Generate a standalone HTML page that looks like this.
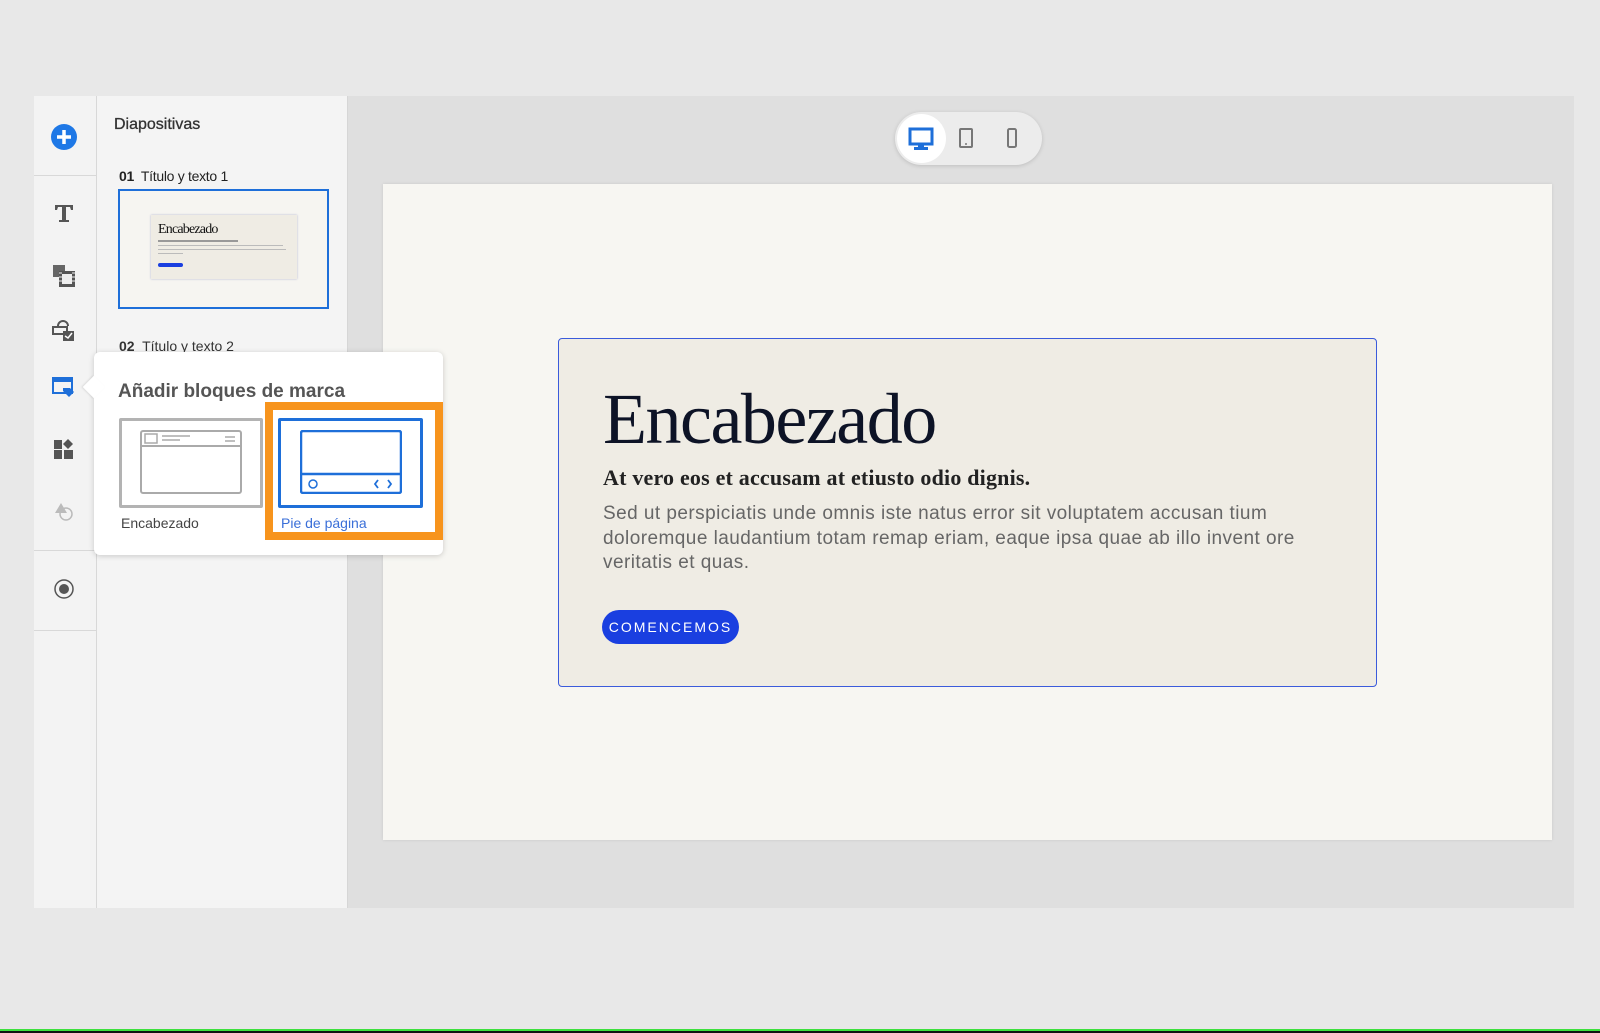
<!DOCTYPE html>
<html><head><meta charset="utf-8"><style>
*{box-sizing:border-box;margin:0;padding:0}
body{width:1600px;height:1033px;background:#e8e8e8;position:relative;overflow:hidden;font-family:"Liberation Sans",sans-serif}
.abs{position:absolute}
.rail{left:34px;top:96px;width:63px;height:812px;background:#f3f3f3;border-right:1px solid #d8d8d8}
.sep{position:absolute;left:0;width:62px;height:1px;background:#d8d8d8}
.panel{left:97px;top:96px;width:251px;height:812px;background:#f4f4f4;border-right:1px solid #d6d6d6}
.canvas{left:348px;top:96px;width:1226px;height:812px;background:#dfdfdf}
.slide{left:383px;top:184px;width:1169px;height:656px;background:#f7f6f2;box-shadow:0 0 3px rgba(0,0,0,.1)}
.card{left:558px;top:338px;width:819px;height:349px;background:#efece4;border:1.5px solid #3b5bdb;border-radius:4px}
.toggle{left:895px;top:112px;width:147px;height:53px;background:#ececec;border-radius:27px;box-shadow:0 1px 4px rgba(0,0,0,.15)}
.pop{left:94px;top:352px;width:349px;height:203px;background:#fff;border-radius:6px;box-shadow:0 1px 6px rgba(0,0,0,.18)}
</style></head><body>
<div class="abs rail">
  <svg class="abs" style="left:16px;top:27px" width="28" height="28" viewBox="0 0 28 28"><circle cx="14" cy="14" r="13" fill="#1e78e6"/><path d="M14 7v14M7 14h14" stroke="#fff" stroke-width="3.5"/></svg>
  <div class="sep" style="top:79px"></div>
  <svg class="abs" style="left:19px;top:106px" width="22" height="22" viewBox="0 0 22 22"><path d="M2 3h18v5h-2l-1-3h-4v13h3v2H6v-2h3V5H5L4 8H2z" fill="#555"/></svg>
  <svg class="abs" style="left:18px;top:168px" width="24" height="24" viewBox="0 0 24 24"><rect x="1" y="1" width="12" height="12" fill="#666"/><rect x="7" y="7" width="16" height="16" fill="#555"/><rect x="10" y="10" width="10" height="10" fill="#eee"/><path d="M7 9h3M7 13h3M7 17h3M20 9h3M20 13h3M20 17h3" stroke="#eee"/></svg>
  <svg class="abs" style="left:18px;top:222px" width="24" height="24" viewBox="0 0 24 24"><path d="M6 8a5 5 0 0 1 10 0" stroke="#555" stroke-width="2" fill="none"/><rect x="1" y="9" width="14" height="7" fill="none" stroke="#555" stroke-width="2"/><rect x="11" y="13" width="11" height="10" fill="#555"/><path d="M13 18l3 2 4-5" stroke="#fff" stroke-width="1.5" fill="none"/></svg>
  <svg class="abs" style="left:18px;top:279px" width="24" height="24" viewBox="0 0 24 24"><rect x="1" y="3" width="19" height="15" fill="none" stroke="#1e6fd9" stroke-width="2"/><rect x="1" y="3" width="19" height="4" fill="#1e6fd9"/><path d="M11 13h7l4 4-5 5-6-6z" fill="#1e6fd9"/></svg>
  <svg class="abs" style="left:19px;top:342px" width="22" height="22" viewBox="0 0 22 22"><rect x="1" y="2" width="8" height="9" fill="#555"/><rect x="1" y="12" width="8" height="9" fill="#555"/><rect x="11" y="12" width="9" height="9" fill="#555"/><path d="M15 1l5 5-5 5-5-5z" fill="#555"/></svg>
  <svg class="abs" style="left:19px;top:405px" width="22" height="22" viewBox="0 0 22 22"><path d="M8 2l6 10H2z" fill="#bbb"/><circle cx="13" cy="13" r="6" fill="none" stroke="#bbb" stroke-width="1.5"/></svg>
  <div class="sep" style="top:454px"></div>
  <svg class="abs" style="left:19px;top:482px" width="22" height="22" viewBox="0 0 22 22"><circle cx="11" cy="11" r="9" fill="none" stroke="#555" stroke-width="1.5"/><circle cx="11" cy="11" r="5" fill="#555"/></svg>
  <div class="sep" style="top:534px"></div>
</div>
<div class="abs panel">
  <div class="abs" style="left:17px;top:20px;font-size:16px;color:#333;-webkit-text-stroke:.3px #333">Diapositivas</div>
  <div class="abs" style="left:22px;top:72px;font-size:14px;color:#222;letter-spacing:-.3px"><b>01</b>&nbsp; Título y texto 1</div>
  <div class="abs" style="left:21px;top:93px;width:211px;height:120px;border:2px solid #1e6fd9;background:#f6f5f1">
    <div class="abs" style="left:31px;top:24px;width:146px;height:64px;background:#efece4;box-shadow:0 0 2px rgba(80,80,160,.4)">
      <div class="abs" style="left:7px;top:7px;font-family:'Liberation Serif',serif;font-size:14px;letter-spacing:-.8px;color:#111">Encabezado</div>
      <div class="abs" style="left:7px;top:25px;width:80px;height:2px;background:#999"></div>
      <div class="abs" style="left:7px;top:30px;width:125px;height:1px;background:#bbb"></div>
      <div class="abs" style="left:7px;top:34px;width:128px;height:1px;background:#bbb"></div>
      <div class="abs" style="left:7px;top:38px;width:25px;height:1px;background:#bbb"></div>
      <div class="abs" style="left:7px;top:48px;width:25px;height:4px;border-radius:2px;background:#1a3fe0"></div>
    </div>
  </div>
  <div class="abs" style="left:22px;top:242px;font-size:14px;color:#333"><b>02</b>&nbsp; Título y texto 2</div>
</div>
<div class="abs canvas"></div>
<div class="abs toggle">
  <div class="abs" style="left:2px;top:2px;width:49px;height:49px;border-radius:50%;background:#fff"></div>
  <svg class="abs" style="left:13px;top:15px" width="26" height="24" viewBox="0 0 26 24"><rect x="2" y="2" width="22" height="15" fill="none" stroke="#1e6fd9" stroke-width="3"/><path d="M10 17h6v3h4v3H6v-3h4z" fill="#1e6fd9"/></svg>
  <svg class="abs" style="left:63px;top:15px" width="16" height="22" viewBox="0 0 16 22"><rect x="2" y="2" width="12" height="18" rx="1" fill="none" stroke="#777" stroke-width="2"/><circle cx="8" cy="17" r="1" fill="#777"/></svg>
  <svg class="abs" style="left:111px;top:15px" width="12" height="22" viewBox="0 0 12 22"><rect x="2" y="2" width="8" height="18" rx="1.5" fill="none" stroke="#777" stroke-width="2"/></svg>
</div>
<div class="abs slide"></div>
<div class="abs card">
  <div class="abs" style="left:44px;top:44px;font-family:'Liberation Serif',serif;font-size:72px;color:#0d1326;line-height:1;letter-spacing:-1.5px;white-space:nowrap">Encabezado</div>
  <div class="abs" style="left:44px;top:126px;font-family:'Liberation Serif',serif;font-weight:bold;font-size:22px;color:#222;white-space:nowrap;letter-spacing:.2px">At vero eos et accusam at etiusto odio dignis.</div>
  <div class="abs" style="left:44px;top:163px;font-size:19px;color:#666;line-height:24.5px;letter-spacing:.45px;white-space:nowrap">Sed ut perspiciatis unde omnis iste natus error sit voluptatem accusan tium<br>doloremque laudantium totam remap eriam, eaque ipsa quae ab illo invent ore<br>veritatis et quas.</div>
  <div class="abs" style="left:43px;top:271px;width:137px;height:34px;border-radius:17px;background:#1a3fe0;color:#fff;font-size:14px;letter-spacing:2px;line-height:34px;text-align:center">COMENCEMOS</div>
</div>
<div class="abs pop">
  <div class="abs" style="left:-8px;top:27px;width:16px;height:16px;background:#fff;transform:rotate(45deg);box-shadow:-1px 1px 2px rgba(0,0,0,.1)"></div>
  <div class="abs" style="left:24px;top:29px;font-size:19px;font-weight:bold;color:#555">Añadir bloques de marca</div>
  <div class="abs" style="left:25px;top:66px;width:144px;height:90px;border:3px solid #b3b3b3;border-radius:2px">
    <svg class="abs" style="left:18px;top:9px" width="102" height="64" viewBox="0 0 102 64"><rect x="1" y="1" width="100" height="62" rx="2" fill="none" stroke="#aaa" stroke-width="2"/><path d="M1 16h100" stroke="#aaa" stroke-width="2"/><rect x="5" y="4" width="12" height="9" fill="none" stroke="#aaa" stroke-width="1.5"/><path d="M22 6h28M22 10h18M85 7h10M85 11h10" stroke="#aaa" stroke-width="1.5"/></svg>
  </div>
  <div class="abs" style="left:27px;top:163px;font-size:14px;color:#444">Encabezado</div>
  <div class="abs" style="left:171px;top:50px;width:178px;height:138px;border:8px solid #f7941d"></div>
  <div class="abs" style="left:184px;top:66px;width:145px;height:90px;border:3px solid #1e6fd9;border-radius:2px">
    <svg class="abs" style="left:19px;top:9px" width="102" height="64" viewBox="0 0 102 64"><rect x="1" y="1" width="100" height="62" rx="2" fill="none" stroke="#1e6fd9" stroke-width="2.5"/><path d="M1 44h100" stroke="#1e6fd9" stroke-width="2.5"/><circle cx="13" cy="54" r="4" fill="none" stroke="#1e6fd9" stroke-width="1.5"/><path d="M78 50l-3 4 3 4M88 50l3 4-3 4" stroke="#1e6fd9" stroke-width="1.8" fill="none"/></svg>
  </div>
  <div class="abs" style="left:187px;top:163px;font-size:14px;color:#3a6fd8">Pie de página</div>
</div>
<div class="abs" style="left:0;top:1029px;width:1600px;height:2px;background:#3de03d"></div>
<div class="abs" style="left:0;top:1031px;width:1600px;height:2px;background:#111"></div>
</body></html>
